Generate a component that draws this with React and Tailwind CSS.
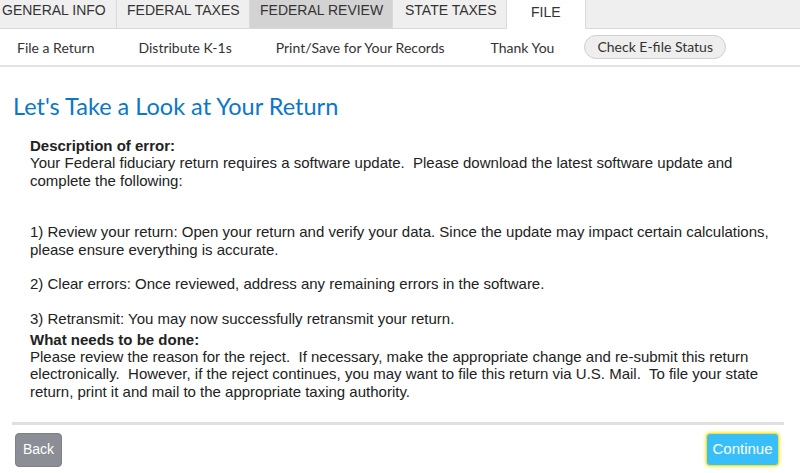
import React from 'react';

const tabs = [
  { label: 'GENERAL INFO', w: 'w-[117px]', pl: 'pl-[2px]', bg: 'bg-[#efefef]' },
  { label: 'FEDERAL TAXES', w: 'w-[133px]', pl: 'pl-[10px]', bg: 'bg-[#efefef]' },
  { label: 'FEDERAL REVIEW', w: 'w-[143px]', pl: 'pl-[10px]', bg: 'bg-[#d3d3d3]' },
  { label: 'STATE TAXES', w: 'w-[114px]', pl: 'pl-[12px]', bg: 'bg-[#efefef]' },
];

const subnav = [
  { label: 'File a Return', ml: 'ml-[17px]' },
  { label: 'Distribute K-1s', ml: 'ml-[44px]' },
  { label: 'Print/Save for Your Records', ml: 'ml-[44px]' },
  { label: 'Thank You', ml: 'ml-[46px]' },
];

export default function App() {
  return (
    <div className="w-[800px] h-[473px] bg-white overflow-hidden text-[#333] font-['Liberation_Sans',Arial,sans-serif]">
      {/* Top tabs */}
      <div className="flex h-[29px] bg-[#efefef]">
        {tabs.map((t) => (
          <div
            key={t.label}
            className={`${t.w} ${t.pl} ${t.bg} h-full border-r border-b border-[#d9d9d9] text-[14px] leading-[20px] text-[#333]`}
          >
            {t.label}
          </div>
        ))}
        <div className="w-[79px] h-full bg-white border-r border-[#d9d9d9] text-[14px] leading-[20px] pt-[2px] pl-[24px]">
          FILE
        </div>
        <div className="flex-1 h-full border-b border-[#d9d9d9]" />
      </div>

      {/* Sub navigation */}
      <div className="flex items-center h-[38px] border-b-2 border-[#e3e3e3] font-['Lato',sans-serif] text-[14px] text-[#333]">
        {subnav.map((s) => (
          <span key={s.label} className={s.ml}>
            {s.label}
          </span>
        ))}
        <span className="ml-[30px] px-[12px] h-[24px] leading-[22px] rounded-full bg-[#eeeeee] border border-[#d0d0d0]">
          Check E-file Status
        </span>
      </div>

      {/* Heading */}
      <h1 className="mt-[25px] ml-[13px] font-['Lato',sans-serif] text-[23.5px] leading-[28px] text-[#0a77c9]">
        Let's Take a Look at Your Return
      </h1>

      {/* Error description */}
      <div className="mt-[17px] ml-[30px] w-[752px] text-[15px] leading-[17.25px] text-[#222]">
        <p className="font-bold">Description of error:</p>
        <p>
          Your Federal fiduciary return requires a software update.{'\u00a0 '}Please download the latest software update and complete the following:
        </p>
        <div className="h-[34.5px]" />
        <p>
          1) Review your return: Open your return and verify your data. Since the update may impact certain calculations, please ensure everything is accurate.
        </p>
        <div className="h-[17.25px]" />
        <p>2) Clear errors: Once reviewed, address any remaining errors in the software.</p>
        <div className="h-[17.25px]" />
        <p>3) Retransmit: You may now successfully retransmit your return.</p>
        <p className="font-bold mt-[4px]">What needs to be done:</p>
        <p>
          Please review the reason for the reject.{'\u00a0 '}If necessary, make the appropriate change and re-submit this return electronically.{'\u00a0 '}However, if the reject continues, you may want to file this return via U.S. Mail.{'\u00a0 '}To file your state return, print it and mail to the appropriate taxing authority.
        </p>
      </div>

      {/* Footer */}
      <div className="mx-[12px] mt-[22px] w-[772px] h-[3px] bg-[#e0e0e0]" />
      <div className="flex justify-between items-start mt-[8px] pl-[15px] pr-[21px]">
        <button className="w-[47px] h-[34px] rounded-[4px] bg-[#8b8e94] text-white text-[14px] border border-[#7d8086]">
          Back
        </button>
        <button className="w-[73px] h-[33px] rounded-[4px] bg-[#38bff9] text-white text-[15px] border border-[#f3e43a] shadow-[0_0_3px_1px_#f7ea5e]">
          Continue
        </button>
      </div>
    </div>
  );
}
